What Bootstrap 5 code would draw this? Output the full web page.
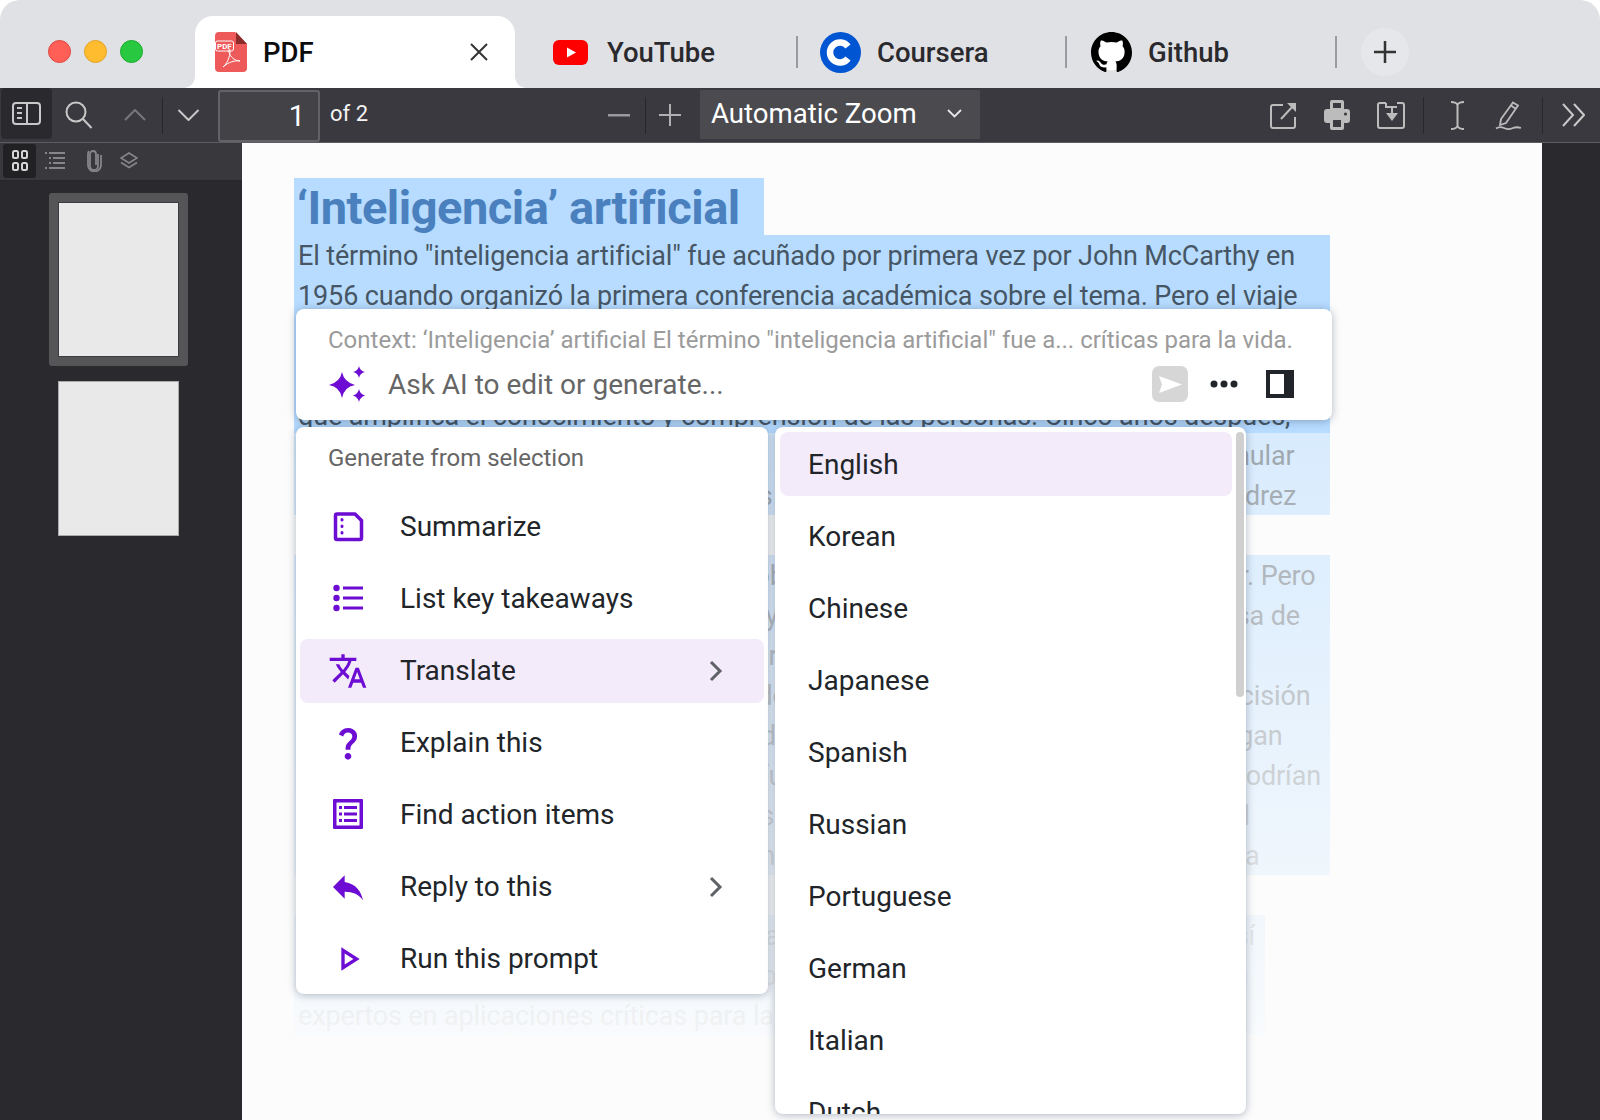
<!doctype html>
<html lang="en">
<head>
    <meta charset="UTF-8">
    <title>PDF</title>
    <link href="https://cdn.jsdelivr.net/npm/bootstrap@5.3.2/dist/css/bootstrap.min.css" rel="stylesheet">
    <style>
        body { background: #fff; font-family: Roboto, "Liberation Sans", sans-serif; overflow: hidden; }
        svg { display: block; flex: none; }

        .win { width: 1600px; height: 1120px; border-radius: 20px 20px 0 0; overflow: hidden; }

        /* tab strip */
        .tabstrip { height: 88px; background: #e0e1e5; }
        .lights { width: 195px; padding-left: 48px; padding-bottom: 25px; gap: 13px; }
        .light { width: 23px; height: 23px; border-radius: 50%; border: 1px solid; }
        .light-r { background: #ff5f57; border-color: #e2463f; }
        .light-y { background: #febc2e; border-color: #e1a325; }
        .light-g { background: #28c840; border-color: #1aab29; }
        .tabitem { height: 72px; font-size: 27.5px; font-weight: 500; color: #2a2a2e; }
        .tab-on { width: 320px; background: #fff; border-radius: 18px 18px 0 0; padding: 0 27px 0 20px; color: #0c0c0d; position: relative; }
        .tab-on::before, .tab-on::after { content: ""; position: absolute; bottom: 0; width: 11px; height: 11px; }
        .tab-on::before { left: -11px; background: radial-gradient(circle at 0 0, transparent 10.5px, #fff 11px); }
        .tab-on::after { right: -11px; background: radial-gradient(circle at 100% 0, transparent 10.5px, #fff 11px); }
        .tab-yt { width: 281px; padding-left: 38px; }
        .tab-co { width: 267px; padding-left: 22px; }
        .tab-gh { width: 268px; padding-left: 24px; }
        .tabname { margin-left: 16px; padding-top: 2px; }
        .tab-yt .tabname { margin-left: 19px; }
        .tabsep { width: 2px; height: 32px; background: #9a9ba0; margin-bottom: 20px; }
        .tabplus { width: 48px; height: 48px; border-radius: 50%; background: #e6e7ea; margin-left: 24px; margin-bottom: 12px; }

        /* pdf toolbar */
        .pdfbar { height: 55px; background: #3a393f; border-bottom: 1px solid #5c5c61; color: #fff; }
        .leftgrp { width: 608px; }
        .togglebtn { width: 51px; height: 51px; background: #2a2a2e; border-radius: 4px; margin-left: 1px; }
        .pageinput { width: 102px; height: 52px; margin: 2px 0 0 18px; background: #434247; border: 2px solid #636367; border-radius: 3px; font-size: 29px; text-align: right; padding-right: 13px; line-height: 49px; align-self: flex-start; }
        .pageof { font-size: 22px; margin-left: 10px; margin-bottom: 4px; color: #f4f4f4; }
        .zoomsel { width: 280px; height: 49px; margin: 2px 0 0 19px; background: #4a4a4f; font-size: 27.6px; padding: 0 18px 2px 11px; align-self: flex-start; }
        .barsep { width: 1px; height: 37px; background: #28282c; }
        .sp9 { margin-left: 9px; }
        .sp13 { margin-left: 13px; }
        .sp14 { margin-left: 14px; }
        .sp15 { margin-left: 15px; }
        .sp16 { margin-left: 16px; }
        .sp18 { margin-left: 18px; }
        .sp19 { margin-left: 19px; }
        .sp20 { margin-left: 20px; }
        .sp22 { margin-left: 22px; }
        .sp26 { margin-left: 26px; }
        .sp27 { margin-left: 27px; }
        .sp30 { margin-left: 30px; }
        .sp31 { margin-left: 31px; }
        .sp290 { margin-left: 290px; }

        /* thumbnails side */
        .mainarea { height: 977px; }
        .sidepane { width: 242px; background: #2a2a2e; }
        .sidetools { height: 38px; background: #38383d; border-bottom: 1px solid #27272a; padding: 0 0 2px 3px; }
        .sidetab-on { width: 33px; height: 34px; background: #212123; border-radius: 3px; }
        .thumbs { padding-top: 12px; }
        .thumbsel { width: 139px; height: 173px; background: #555558; border-radius: 3px; margin-left: 49px; }
        .thumbpage { width: 121px; height: 155px; background: #e9e9e9; border: 1px solid #3c3c40; }
        .thumb2 { margin: 15px 0 0 58px; width: 121px; height: 155px; border-color: #aaa; }

        /* document */
        .docpage { width: 1300px; background: #fcfcfc; position: relative; padding: 35px 0 0 52px; overflow: hidden; }
        .docgutter { width: 58px; background: #2a2a2e; }
        .doctitle { width: 470px; height: 57px; background: #b7dcff; color: #4a80be; font-size: 47px; font-weight: 700; line-height: 60px; padding-left: 3px; white-space: nowrap; letter-spacing: -0.5px; }
        .docpara { width: 1036px; background: #b7dcff; margin-bottom: 40px; }
        .docpara-short { width: 971px; }
        .docline { display: block; height: 40px; line-height: 42px; font-size: 27px; letter-spacing: -0.13px; padding-left: 4px; color: #465664; white-space: nowrap; }
        .docfade { position: absolute; left: 0; right: 0; top: 290px; bottom: 0; background: linear-gradient(rgba(252,252,252,.48), rgba(252,252,252,.99) 96%); }

        /* AI popups */
        .askbox, .genmenu, .langmenu { position: absolute; background: #fff; border-radius: 8px; box-shadow: 0 1px 8px rgba(30,50,80,.35); }
        .askbox { left: 54px; top: 166px; width: 1036px; height: 111px; padding: 16px 38px 0 32px; }
        .askctx { font-size: 24px; line-height: 30px; color: #9b9b9b; white-space: nowrap; }
        .askrow { height: 36px; margin-top: 11px; }
        .askinput { font-size: 28px; color: #666; margin-left: 21px; padding-top: 1px; }
        .askspark { margin-left: 1px; }
        .sendbtn { width: 36px; height: 36px; background: #d6d6d6; border-radius: 7px; }
        .morebtn { margin-left: 22px; }
        .panelbtn { margin-left: 28px; }
        .genmenu { left: 54px; top: 284px; width: 472px; height: 567px; padding: 0 4px; }
        .genhead { height: 68px; font-size: 24px; color: #666; padding: 0 28px; line-height: 62px; }
        .langmenu { left: 533px; top: 284px; width: 471px; height: 687px; overflow: hidden; padding: 5px 14px 0 5px; }
        .menurow { height: 64px; margin-bottom: 8px; font-size: 28px; color: #212529; border-radius: 8px; white-space: nowrap; }
        .menurow-on { background: #f3ebfa; }
        .genrow { padding-left: 28px; padding-right: 41px; }
        .genrow .rowtxt { margin-left: 32px; }
        .langrow { padding: 2px 0 0 28px; }
        .scrollthumb { position: absolute; right: 2px; top: 5px; width: 8px; height: 265px; background: #d0d0d0; border-radius: 4px; }
    </style>
</head>
<body>
<div class="win d-flex flex-column">

    <div class="tabstrip d-flex align-items-end">
        <div class="lights d-flex">
            <span class="light light-r"></span><span class="light light-y"></span><span class="light light-g"></span>
        </div>
        <div class="tabitem tab-on d-flex align-items-center">
            <svg width="32" height="40" viewBox="0 0 32 40">
                <path d="M4 0H20L32 12V36a4 4 0 0 1-4 4H4a4 4 0 0 1-4-4V4a4 4 0 0 1 4-4z" fill="#ee5959"/>
                <path d="M21 0L32 12H21z" fill="#8c2b2b"/>
                <rect x="0.5" y="9" width="18" height="10" rx="2" fill="#ee5959" stroke="#fff" stroke-width="1"/>
                <text x="2" y="17" font-size="8" font-weight="700" fill="#fff" font-family="Roboto">PDF</text>
                <path d="M8 35c4-3 7-10 7-16 0-3-2-2-1 1 1 5 6 9 11 9-4-1-12 1-17 6z" fill="none" stroke="#fff" stroke-width="1"/>
            </svg>
            <span class="tabname flex-grow-1">PDF</span>
            <svg width="18" height="18" viewBox="0 0 18 18"><path d="M1 1L17 17M17 1L1 17" stroke="#333" stroke-width="2"/></svg>
        </div>
        <div class="tabitem tab-yt d-flex align-items-center">
            <svg width="35" height="25" viewBox="0 0 35 25"><rect width="35" height="25" rx="6" fill="#f00"/><path d="M14 7.5V17.5L23 12.5z" fill="#fff"/></svg>
            <span class="tabname flex-grow-1">YouTube</span>
        </div>
        <div class="tabsep"></div>
        <div class="tabitem tab-co d-flex align-items-center">
            <svg width="41" height="41" viewBox="0 0 41 41"><circle cx="20.5" cy="20.5" r="20.5" fill="#0056d2"/><path d="M28 14.5a10 10 0 1 0 0 12" fill="none" stroke="#fff" stroke-width="6.5"/></svg>
            <span class="tabname flex-grow-1">Coursera</span>
        </div>
        <div class="tabsep"></div>
        <div class="tabitem tab-gh d-flex align-items-center">
            <svg width="41" height="41" viewBox="0 0 16 16"><circle cx="8" cy="8" r="7" fill="#fff"/><path d="M8 0C3.58 0 0 3.58 0 8c0 3.54 2.29 6.53 5.47 7.59.4.07.55-.17.55-.38 0-.19-.01-.82-.01-1.49-2.01.37-2.53-.49-2.69-.94-.09-.23-.48-.94-.82-1.13-.28-.15-.68-.52-.01-.53.63-.01 1.08.58 1.23.82.72 1.21 1.87.87 2.33.66.07-.52.28-.87.51-1.07-1.78-.2-3.64-.89-3.64-3.95 0-.87.31-1.59.82-2.15-.08-.2-.36-1.02.08-2.12 0 0 .67-.21 2.2.82.64-.18 1.32-.27 2-.27.68 0 1.36.09 2 .27 1.53-1.04 2.2-.82 2.2-.82.44 1.1.16 1.92.08 2.12.51.56.82 1.27.82 2.15 0 3.07-1.87 3.75-3.65 3.95.29.25.54.73.54 1.48 0 1.07-.01 1.93-.01 2.2 0 .21.15.46.55.38A8.013 8.013 0 0016 8c0-4.42-3.58-8-8-8z" fill="#000"/></svg>
            <span class="tabname flex-grow-1">Github</span>
        </div>
        <div class="tabsep"></div>
        <div class="tabplus d-flex align-items-center justify-content-center">
            <svg width="24" height="24" viewBox="0 0 24 24"><path d="M12 1V23M1 12H23" stroke="#333" stroke-width="2.5"/></svg>
        </div>
    </div>

    <div class="pdfbar d-flex align-items-center">
        <div class="leftgrp d-flex align-items-center">
            <div class="togglebtn d-flex align-items-center justify-content-center align-self-start">
                <svg width="29" height="23" viewBox="0 0 29 23" fill="none" stroke="#c8c8c8" stroke-width="2"><rect x="1" y="1" width="27" height="21" rx="3"/><path d="M15 1V22M5 6H10M5 11H10M5 16H10"/></svg>
            </div>
            <svg class="sp13" width="28" height="28" viewBox="0 0 28 28" fill="none" stroke="#c8c8c8" stroke-width="2"><circle cx="11" cy="11" r="9.5"/><path d="M18 18L26.5 27"/></svg>
            <svg class="sp31" width="22" height="12" viewBox="0 0 22 12" fill="none" stroke="#77777a" stroke-width="2"><path d="M1 11L11 1L21 11"/></svg>
            <span class="barsep sp16"></span>
            <svg class="sp14" width="23" height="12" viewBox="0 0 22 12" fill="none" stroke="#c8c8c8" stroke-width="2"><path d="M1 1L11 11L21 1"/></svg>
            <div class="pageinput">1</div>
            <span class="pageof">of 2</span>
        </div>
        <svg width="22" height="3" viewBox="0 0 22 3"><rect width="22" height="2.5" fill="#9a9a9d"/></svg>
        <span class="barsep sp15"></span>
        <svg class="sp13" width="22" height="22" viewBox="0 0 22 22"><path d="M11 0V22M0 11H22" stroke="#b0b0b2" stroke-width="2"/></svg>
        <div class="zoomsel d-flex align-items-center justify-content-between">
            <span>Automatic Zoom</span>
            <svg width="15" height="9" viewBox="0 0 15 9" fill="none" stroke="#e8e8e8" stroke-width="1.8"><path d="M1 1L7.5 7.5L14 1"/></svg>
        </div>
        <svg class="sp290" width="27" height="27" viewBox="0 0 27 27" fill="none" stroke="#bcbcbc" stroke-width="2"><path d="M13 3H3a2 2 0 0 0-2 2V24a2 2 0 0 0 2 2H23a2 2 0 0 0 2-2V15M11 17L24 3"/><path d="M17 1H26V10z" fill="#bcbcbc" stroke="none"/></svg>
        <svg class="sp27" width="26" height="30" viewBox="0 0 26 30"><path d="M8 0H18a2 2 0 0 1 2 2V9H6V2a2 2 0 0 1 2-2zM3 9H23a3 3 0 0 1 3 3V20a3 3 0 0 1-3 3H20V28a2 2 0 0 1-2 2H8a2 2 0 0 1-2-2V23H3a3 3 0 0 1-3-3V12a3 3 0 0 1 3-3z" fill="#bcbcbc"/><rect x="9" y="20" width="8" height="7" fill="#3a393f"/><rect x="9" y="3" width="8" height="5" fill="#3a393f"/><circle cx="21.5" cy="14" r="1.6" fill="#3a393f"/></svg>
        <svg class="sp27" width="28" height="28" viewBox="0 0 28 28" fill="none" stroke="#bcbcbc" stroke-width="2"><path d="M9 2H3a2 2 0 0 0-2 2V25a2 2 0 0 0 2 2H25a2 2 0 0 0 2-2V4a2 2 0 0 0-2-2H20"/><path d="M15 5V13"/><path d="M9 12H21L15 20z" fill="#bcbcbc" stroke="none"/><path d="M9 2V6H20"/></svg>
        <span class="barsep sp18"></span>
        <svg class="sp26" width="15" height="29" viewBox="0 0 15 29" fill="none" stroke="#bcbcbc" stroke-width="2"><path d="M1 1C4 1 6.500 1.500 7.500 4V25C6.500 27.500 4 28 1 28M14 1C11 1 8.500 1.500 7.500 4M14 28C11 28 8.500 27.500 7.500 25"/></svg>
        <svg class="sp30" width="27" height="29" viewBox="0 0 27 29" fill="none" stroke="#bcbcbc" stroke-width="1.8"><path d="M18 1.500L23 4.500L11 22L5 24L6 18zM16 4.500L21 8"/><path d="M1 27.500C4 25.500 6 25.500 9 27C12 28.500 15 28.500 18 27C20.500 26 23 26 26 27"/></svg>
        <span class="barsep sp20"></span>
        <svg class="sp19" width="23" height="24" viewBox="0 0 23 24" fill="none" stroke="#c8c8c8" stroke-width="2"><path d="M1 1L11 12L1 23M12 1L22 12L12 23"/></svg>
    </div>

    <div class="mainarea d-flex">
        <div class="sidepane">
            <div class="sidetools d-flex align-items-center">
                <div class="sidetab-on d-flex align-items-center justify-content-center">
                    <svg width="16" height="21" viewBox="0 0 16 21" fill="none" stroke="#d4d4d4" stroke-width="2"><rect x="1" y="1" width="5" height="7" rx="1.500"/><rect x="10" y="1" width="5" height="7" rx="1.500"/><rect x="1" y="13" width="5" height="7" rx="1.500"/><rect x="10" y="13" width="5" height="7" rx="1.500"/></svg>
                </div>
                <svg class="sp9" width="20" height="18" viewBox="0 0 20 18" stroke="#85858a" stroke-width="2"><path d="M0 1H2M4 1H20M4 6H6M8 6H20M4 11H6M8 11H20M0 16H2M4 16H20"/></svg>
                <svg class="sp22" width="15" height="23" viewBox="0 0 15 23" fill="none" stroke="#85858a" stroke-width="1.800"><path d="M11 5V17a4 4 0 0 1-8 0V5a3 3 0 0 1 6 0V16"/><path d="M14 6V16a6.500 6.500 0 0 1-13 0V5a4.500 4.500 0 0 1 1-3"/></svg>
                <svg class="sp18" width="18" height="17" viewBox="0 0 18 17" fill="none" stroke="#85858a" stroke-width="1.600"><path d="M9 1L17 6L9 11L1 6zM1 10.500L9 15.500L17 10.500"/></svg>
            </div>
            <div class="thumbs">
                <div class="thumbsel d-flex align-items-center justify-content-center"><div class="thumbpage"></div></div>
                <div class="thumbpage thumb2"></div>
            </div>
        </div>

        <div class="docpage">
            <div class="doctitle">‘Inteligencia’ artificial</div>
            <div class="docpara">
                <span class="docline">El término "inteligencia artificial" fue acuñado por primera vez por John McCarthy en</span>
                <span class="docline">1956 cuando organizó la primera conferencia académica sobre el tema. Pero el viaje</span>
                <span class="docline">para entender si las máquinas realmente pueden pensar comenzó antes de eso.</span>
                <span class="docline">En su ensayo de 1945, Vannevar Bush propuso un sistema, el Memex, una máquina</span>
                <span class="docline">que amplifica el conocimiento y comprensión de las personas. Cinco años después,</span>
                <span class="docline">Alan Turing escribió un artículo sobre la idea de que las máquinas sí podrían simular</span>
                <span class="docline">la inteligencia humana y realizar labores inteligentes, como jugar partidas de ajedrez</span>
            </div>
            <div class="docpara">
                <span class="docline">Aunque la IA suele representarse con robots que hablan, su alcance ya es mayor. Pero</span>
                <span class="docline">ha llegado a nuestra vida cotidiana y hoy resuelve desafíos en la oficina o en casa de</span>
                <span class="docline">muchas personas y en las grandes empresas de todo el mundo.</span>
                <span class="docline">Los sistemas de hoy aprenden a partir de muchos datos y mejoran con más precisión</span>
                <span class="docline">sin que los programadores tengan que decirles uno a uno lo que quieren que hagan</span>
                <span class="docline">y los investigadores creen que ya en el futuro cercano estos sistemas también podrían</span>
                <span class="docline">ayudar a médicos y científicos en tareas muy complejas y difíciles de resolver. El</span>
                <span class="docline">reto ahora es hacer que estas herramientas sean seguras y muy fiables para toda</span>
            </div>
            <div class="docpara docpara-short">
                <span class="docline">Por eso los gobiernos y las empresas trabajan juntos en dar nuevas normas y así</span>
                <span class="docline">garantizan que los resultados sean justos y transparentes para todos, con ayuda</span>
                <span class="docline">expertos en aplicaciones críticas para la vida.</span>
            </div>
            <div class="docfade"></div>

            <div class="askbox">
                <div class="askctx">Context: ‘Inteligencia’ artificial El término "inteligencia artificial" fue a... críticas para la vida.</div>
                <div class="askrow d-flex align-items-center">
                    <svg class="askspark" width="38" height="36" viewBox="0 0 38 36" fill="#6d0cd2"><path d="M13 6Q15 16 26 19Q15 21 13 32Q11 21 0 19Q11 16 13 6z"/><path d="M30 0Q31 5 36 6Q31 7 30 12Q29 7 24 6Q29 5 30 0z"/><path d="M30 23Q31 28 36 29.500Q31 31 30 36Q29 31 24 29.500Q29 28 30 23z"/></svg>
                    <span class="askinput flex-grow-1">Ask AI to edit or generate...</span>
                    <div class="sendbtn"><svg width="36" height="36" viewBox="0 0 36 36"><path d="M7 10L30 18.500L7 27L10 18.500z" fill="#fff"/></svg></div>
                    <svg class="morebtn" width="28" height="8" viewBox="0 0 28 8" fill="#212529"><circle cx="4" cy="4" r="3.500"/><circle cx="14" cy="4" r="3.500"/><circle cx="24" cy="4" r="3.500"/></svg>
                    <svg class="panelbtn" width="28" height="28" viewBox="0 0 28 28"><rect width="28" height="28" fill="#212529"/><rect x="4" y="4" width="14" height="20" fill="#fff"/></svg>
                </div>
            </div>

            <div class="genmenu">
                <div class="genhead">Generate from selection</div>
                <div class="menurow genrow d-flex align-items-center">
                    <svg width="40" height="40" viewBox="0 0 40 40" fill="none" stroke="#6d0cd2" stroke-width="3.500"><path d="M9 7H27L33.500 13.500V31a1.500 1.500 0 0 1-1.500 1.500H9a1.500 1.500 0 0 1-1.500-1.500V8.500a1.500 1.500 0 0 1 1.500-1.500z" stroke-linejoin="round"/><path d="M14 12.500V13M14 19V19.500M14 25.500V26" stroke-width="3" stroke-linecap="round"/></svg>
                    <span class="rowtxt flex-grow-1">Summarize</span>
                </div>
                <div class="menurow genrow d-flex align-items-center">
                    <svg width="40" height="40" viewBox="0 0 40 40" fill="#6d0cd2"><circle cx="8.500" cy="9" r="3.200"/><circle cx="8.500" cy="19" r="3.200"/><circle cx="8.500" cy="29" r="3.200"/><rect x="15" y="7.500" width="20" height="3"/><rect x="15" y="17.500" width="20" height="3"/><rect x="15" y="27.500" width="20" height="3"/></svg>
                    <span class="rowtxt flex-grow-1">List key takeaways</span>
                </div>
                <div class="menurow menurow-on genrow d-flex align-items-center">
                    <svg width="40" height="40" viewBox="0 0 24 24" fill="#6d0cd2"><path d="M12.870 15.070l-2.540-2.510.03-.03c1.740-1.940 2.980-4.170 3.710-6.530H17V4h-7V2H8v2H1v1.990h11.170C11.500 7.920 10.440 9.750 9 11.350 8.070 10.320 7.300 9.190 6.690 8h-2c.73 1.630 1.730 3.170 2.980 4.560l-5.090 5.020L4 19l5-5 3.110 3.110.76-2.040zM18.500 10h-2L12 22h2l1.120-3h4.750L21 22h2l-4.500-12zm-2.620 7l1.620-4.330L19.120 17h-3.240z"/></svg>
                    <span class="rowtxt flex-grow-1">Translate</span>
                    <svg width="14" height="22" viewBox="0 0 14 22" fill="none" stroke="#5f6368" stroke-width="3"><path d="M2 2L11 11L2 20"/></svg>
                </div>
                <div class="menurow genrow d-flex align-items-center">
                    <svg width="40" height="40" viewBox="0 0 24 24" fill="#6d0cd2"><path d="M11.070 12.850c.77-1.390 2.250-2.210 3.110-3.440.91-1.290.4-3.700-2.180-3.700-1.690 0-2.520 1.280-2.870 2.340L6.540 6.960C7.250 4.830 9.180 3 11.990 3c2.350 0 3.960 1.070 4.780 2.410.7 1.150 1.110 3.300.03 4.900-1.200 1.770-2.350 2.310-2.970 3.450-.25.46-.35.76-.35 2.240h-2.890c-.01-.78-.13-2.050.48-3.150zM14 20c0 1.100-.9 2-2 2s-2-.9-2-2 .9-2 2-2 2 .9 2 2z"/></svg>
                    <span class="rowtxt flex-grow-1">Explain this</span>
                </div>
                <div class="menurow genrow d-flex align-items-center">
                    <svg width="40" height="40" viewBox="0 0 40 40" fill="#6d0cd2"><path d="M6 4H34a1 1 0 0 1 1 1V33a1 1 0 0 1-1 1H6a1 1 0 0 1-1-1V5a1 1 0 0 1 1-1zM8.500 7.500V30.500H31.500V7.500z" fill-rule="evenodd"/><rect x="11" y="11" width="3" height="3"/><rect x="11" y="17.500" width="3" height="3"/><rect x="11" y="24" width="3" height="3"/><rect x="16" y="11" width="13" height="3"/><rect x="16" y="17.500" width="13" height="3"/><rect x="16" y="24" width="13" height="3"/></svg>
                    <span class="rowtxt flex-grow-1">Find action items</span>
                </div>
                <div class="menurow genrow d-flex align-items-center">
                    <svg width="40" height="40" viewBox="0 0 24 24" fill="#6d0cd2"><path d="M10 9V5l-7 7 7 7v-4.100c5 0 8.500 1.600 11 5.100-1-5-4-10-11-11z"/></svg>
                    <span class="rowtxt flex-grow-1">Reply to this</span>
                    <svg width="14" height="22" viewBox="0 0 14 22" fill="none" stroke="#5f6368" stroke-width="3"><path d="M2 2L11 11L2 20"/></svg>
                </div>
                <div class="menurow genrow d-flex align-items-center">
                    <svg width="40" height="40" viewBox="0 0 24 24" fill="#6d0cd2"><path d="M10 8.640L15.270 12 10 15.360V8.640M8 5v14l11-7L8 5z"/></svg>
                    <span class="rowtxt flex-grow-1">Run this prompt</span>
                </div>
            </div>

            <div class="langmenu">
                <div class="menurow menurow-on langrow d-flex align-items-center">English</div>
                <div class="menurow langrow d-flex align-items-center">Korean</div>
                <div class="menurow langrow d-flex align-items-center">Chinese</div>
                <div class="menurow langrow d-flex align-items-center">Japanese</div>
                <div class="menurow langrow d-flex align-items-center">Spanish</div>
                <div class="menurow langrow d-flex align-items-center">Russian</div>
                <div class="menurow langrow d-flex align-items-center">Portuguese</div>
                <div class="menurow langrow d-flex align-items-center">German</div>
                <div class="menurow langrow d-flex align-items-center">Italian</div>
                <div class="menurow langrow d-flex align-items-center">Dutch</div>
                <div class="scrollthumb"></div>
            </div>
        </div>
        <div class="docgutter"></div>
    </div>
</div>
<script src="https://cdn.jsdelivr.net/npm/bootstrap@5.3.2/dist/js/bootstrap.bundle.min.js"></script>
</body>
</html>
